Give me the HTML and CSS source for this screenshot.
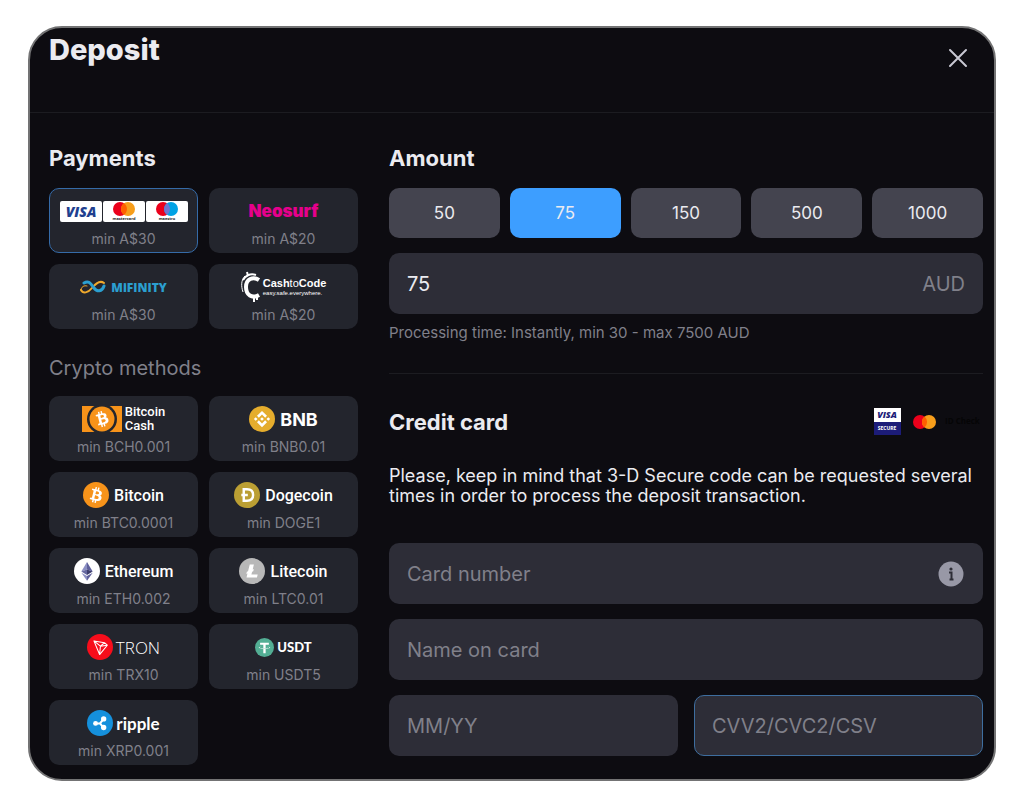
FILE: index.html
```
<!DOCTYPE html>
<html lang="en">
<head>
    <meta charset="UTF-8">
    <meta name="viewport" content="width=device-width, initial-scale=1.0">
    <title>Deposit</title>
    <link rel="stylesheet" href="styles.css">
</head>
<body>
    <main class="modal">
        <header class="modal-header">
            <h1>Deposit</h1>
            <button type="button" class="close" aria-label="Close">
                <svg width="20" height="20" viewBox="0 0 20 20"><path d="M2 2l16 16M18 2L2 18" stroke="#c9c9d3" stroke-width="2" stroke-linecap="round"/></svg>
            </button>
        </header>

        <div class="modal-body">
            <section class="methods">
                <h2>Payments</h2>
                <div class="tiles">
                    <button type="button" class="tile active">
                        <span class="logo">
                            <svg width="128" height="21" viewBox="0 0 128 21">
                                <rect width="42" height="21" rx="2" fill="#fff"/>
                                <rect x="43" width="42" height="21" rx="2" fill="#fff"/>
                                <rect x="86" width="42" height="21" rx="2" fill="#fff"/>
                                <text x="21" y="16" class="visa-text">VISA</text>
                                <circle cx="60" cy="8" r="7" fill="#eb001b"/>
                                <circle cx="68" cy="8" r="7" fill="#f79e1b"/>
                                <path d="M64 2.300a7 7 0 0 1 0 11.400a7 7 0 0 1 0-11.400z" fill="#ff5f00"/>
                                <text x="64" y="19" class="brand-text">mastercard</text>
                                <circle cx="103" cy="8" r="7" fill="#eb001b"/>
                                <circle cx="111" cy="8" r="7" fill="#00a2e5"/>
                                <path d="M107 2.300a7 7 0 0 1 0 11.400a7 7 0 0 1 0-11.400z" fill="#7375cf"/>
                                <text x="107" y="19" class="brand-text">maestro</text>
                            </svg>
                        </span>
                        <span class="min">min A$30</span>
                    </button>
                    <button type="button" class="tile">
                        <span class="logo neosurf">Neosurf</span>
                        <span class="min">min A$20</span>
                    </button>
                    <button type="button" class="tile">
                        <span class="logo mifinity">
                            <svg width="26" height="14" viewBox="0 0 26 14" fill="none" stroke-linecap="round">
                                <path d="M1 10c2 4 7 3 11-2s8-8 12-5" stroke="#efa92c" stroke-width="2"/>
                                <path d="M4 3c5-3 7 1 10 5s8 4 10-2" stroke="#2b9fd0" stroke-width="3"/>
                                <path d="M1 10C1 7 4 5 7 6" stroke="#efa92c" stroke-width="1"/>
                            </svg>
                            <span>MiFINITY</span>
                        </span>
                        <span class="min">min A$30</span>
                    </button>
                    <button type="button" class="tile">
                        <span class="logo cashtocode">
                            <svg width="20" height="32" viewBox="0 0 20 32" fill="none" stroke="#fff">
                                <path d="M18 9C12 5 5 8 5 16s6 12 13 8" stroke-width="4"/>
                                <path d="M4 5C0 9 0 15 2 21" stroke-width="1"/>
                                <path d="M6 1l1 4M13 26v5M16 26v3" stroke-width="2"/>
                                <path d="M2 9C4 5 9 2 15 4" stroke-width="2"/>
                            </svg>
                            <span class="cash-words">
                                <span class="cash-name">Cash<i>to</i>Code</span>
                                <span class="cash-tag">easy.safe.everywhere.</span>
                            </span>
                        </span>
                        <span class="min">min A$20</span>
                    </button>
                </div>

                <h3>Crypto methods</h3>
                <div class="tiles">
                    <button type="button" class="tile">
                        <span class="logo bch">
                            <svg width="40" height="26" viewBox="0 0 40 26">
                                <rect width="40" height="26" fill="#f7931a"/>
                                <circle cx="20" cy="13" r="15" fill="#24262d"/>
                                <circle cx="20" cy="13" r="12.500" fill="#f7931a"/>
                                <g transform="rotate(-28 20 13) translate(7 0) scale(.81)"><path fill="#fff" d="M23.189 14.02c.314-2.096-1.283-3.223-3.465-3.975l.708-2.84-1.728-.43-.69 2.765c-.454-.114-.92-.22-1.385-.326l.695-2.783L15.596 6l-.708 2.839c-.376-.086-.746-.17-1.104-.26l.002-.009-2.384-.595-.46 1.846s1.283.294 1.256.312c.7.175.826.638.805 1.006l-.806 3.235c.048.012.11.03.18.057l-.183-.045-1.13 4.532c-.086.212-.303.531-.793.41.018.025-1.256-.313-1.256-.313l-.858 1.978 2.25.561c.418.105.828.215 1.231.318l-.715 2.872 1.727.43.708-2.84c.472.127.93.245 1.378.357l-.706 2.828 1.728.43.715-2.866c2.948.558 5.164.333 6.097-2.333.752-2.146-.037-3.385-1.588-4.192 1.13-.26 1.98-1.003 2.207-2.538zm-3.95 5.538c-.533 2.147-4.148.986-5.32.695l.95-3.805c1.172.293 4.929.872 4.37 3.11zm.535-5.569c-.487 1.953-3.495.96-4.47.717l.86-3.45c.975.243 4.118.696 3.61 2.733z"/></g>
                            </svg>
                            <span>Bitcoin<br>Cash</span>
                        </span>
                        <span class="min">min BCH0.001</span>
                    </button>
                    <button type="button" class="tile">
                        <span class="logo bnb">
                            <svg width="26" height="26" viewBox="0 0 32 32">
                                <circle cx="16" cy="16" r="16" fill="#e5ad2d"/>
                                <path fill="#fff" d="M12.116 14.404L16 10.52l3.886 3.886 2.26-2.26L16 6l-6.144 6.144 2.26 2.26zM6 16l2.260-2.260L10.520 16l-2.260 2.260L6 16zm6.116 1.596L16 21.480l3.886-3.886 2.260 2.259L16 26l-6.144-6.144-.003-.003 2.263-2.257zM21.480 16l2.260-2.260L26 16l-2.260 2.260L21.480 16zM16 13.700l2.300 2.300-2.300 2.300-2.300-2.300z"/>
                            </svg>
                            <span>BNB</span>
                        </span>
                        <span class="min">min BNB0.01</span>
                    </button>
                    <button type="button" class="tile">
                        <span class="logo coin">
                            <svg width="26" height="26" viewBox="0 0 32 32">
                                <circle cx="16" cy="16" r="16" fill="#f7931a"/>
                                <path fill="#fff" d="M23.189 14.02c.314-2.096-1.283-3.223-3.465-3.975l.708-2.84-1.728-.43-.69 2.765c-.454-.114-.92-.22-1.385-.326l.695-2.783L15.596 6l-.708 2.839c-.376-.086-.746-.17-1.104-.26l.002-.009-2.384-.595-.46 1.846s1.283.294 1.256.312c.7.175.826.638.805 1.006l-.806 3.235c.048.012.11.03.18.057l-.183-.045-1.13 4.532c-.086.212-.303.531-.793.41.018.025-1.256-.313-1.256-.313l-.858 1.978 2.25.561c.418.105.828.215 1.231.318l-.715 2.872 1.727.43.708-2.84c.472.127.93.245 1.378.357l-.706 2.828 1.728.43.715-2.866c2.948.558 5.164.333 6.097-2.333.752-2.146-.037-3.385-1.588-4.192 1.13-.26 1.98-1.003 2.207-2.538zm-3.95 5.538c-.533 2.147-4.148.986-5.32.695l.95-3.805c1.172.293 4.929.872 4.37 3.11zm.535-5.569c-.487 1.953-3.495.96-4.47.717l.86-3.45c.975.243 4.118.696 3.61 2.733z"/>
                            </svg>
                            <span>Bitcoin</span>
                        </span>
                        <span class="min">min BTC0.0001</span>
                    </button>
                    <button type="button" class="tile">
                        <span class="logo coin">
                            <svg width="26" height="26" viewBox="0 0 32 32">
                                <circle cx="16" cy="16" r="16" fill="#bb9f33"/>
                                <path d="M12 9h4c5 0 7.500 3 7.500 7s-2.500 7-7.500 7h-4zM9 16h8" fill="none" stroke="#fff" stroke-width="3"/>
                            </svg>
                            <span>Dogecoin</span>
                        </span>
                        <span class="min">min DOGE1</span>
                    </button>
                    <button type="button" class="tile">
                        <span class="logo coin">
                            <svg width="26" height="26" viewBox="0 0 32 32">
                                <circle cx="16" cy="16" r="16" fill="#fff"/>
                                <path d="M16 5l-7 11.500L16 14z" fill="#8b8fc4"/>
                                <path d="M16 5l7 11.500L16 14z" fill="#5e609b"/>
                                <path d="M9 16.500L16 14v7z" fill="#65679f"/>
                                <path d="M23 16.500L16 14v7z" fill="#3c3d6d"/>
                                <path d="M9 18l7 4v6z" fill="#8b8fc4"/>
                                <path d="M23 18l-7 4v6z" fill="#5e609b"/>
                            </svg>
                            <span>Ethereum</span>
                        </span>
                        <span class="min">min ETH0.002</span>
                    </button>
                    <button type="button" class="tile">
                        <span class="logo coin">
                            <svg width="26" height="26" viewBox="0 0 32 32">
                                <circle cx="16" cy="16" r="16" fill="#b8b8b8"/>
                                <path fill="#fff" d="M10.427 19.214L9 19.768l.688-2.759 1.444-.58L13.213 8h5.129l-1.519 6.196 1.410-.571-.680 2.750-1.427.571-.848 3.483H23L22.127 24H9.252z"/>
                            </svg>
                            <span>Litecoin</span>
                        </span>
                        <span class="min">min LTC0.01</span>
                    </button>
                    <button type="button" class="tile">
                        <span class="logo tron">
                            <svg width="26" height="26" viewBox="0 0 32 32">
                                <circle cx="16" cy="16" r="16" fill="#f70d1b"/>
                                <path d="M8.500 8.500l13 2.300 3.500 3-9.500 11.500zM8.500 8.500l8 6.500 5-4.200M16.500 15l8.500-1.200M16.500 15l-1 10.300" fill="none" stroke="#fff" stroke-width="1.300" stroke-linejoin="round"/>
                            </svg>
                            <span>TRON</span>
                        </span>
                        <span class="min">min TRX10</span>
                    </button>
                    <button type="button" class="tile">
                        <span class="logo usdt">
                            <svg width="19" height="19" viewBox="0 0 32 32">
                                <circle cx="16" cy="16" r="16" fill="#53ae94"/>
                                <path fill="#fff" d="M17.922 17.383v-.002c-.11.008-.677.042-1.942.042-1.010 0-1.721-.03-1.971-.042v.003c-3.888-.171-6.790-.848-6.790-1.658 0-.809 2.902-1.486 6.790-1.660v2.644c.254.018.982.061 1.988.061 1.207 0 1.812-.05 1.925-.06v-2.643c3.880.173 6.775.850 6.775 1.658 0 .810-2.895 1.485-6.775 1.657m0-3.590v-2.366h5.414V7.819H8.595v3.608h5.414v2.365c-4.400.202-7.709 1.074-7.709 2.118 0 1.044 3.309 1.915 7.709 2.118v7.582h3.913v-7.584c4.393-.202 7.694-1.073 7.694-2.116 0-1.043-3.301-1.914-7.694-2.117"/>
                            </svg>
                            <span>USDT</span>
                        </span>
                        <span class="min">min USDT5</span>
                    </button>
                    <button type="button" class="tile">
                        <span class="logo ripple">
                            <svg width="26" height="26" viewBox="0 0 32 32">
                                <circle cx="16" cy="16" r="16" fill="#1590dc"/>
                                <path d="M11 16.500h5l4-5M16 16.500l4 5" fill="none" stroke="#fff" stroke-width="2.500"/>
                                <circle cx="10.500" cy="16.500" r="3" fill="#fff"/>
                                <circle cx="20.500" cy="11" r="3.300" fill="#fff"/>
                                <circle cx="20.500" cy="21.500" r="3.300" fill="#fff"/>
                            </svg>
                            <span>ripple</span>
                        </span>
                        <span class="min">min XRP0.001</span>
                    </button>
                </div>
            </section>

            <form class="payment">
                <h2>Amount</h2>
                <div class="amounts">
                    <button type="button">50</button>
                    <button type="button" class="selected">75</button>
                    <button type="button">150</button>
                    <button type="button">500</button>
                    <button type="button">1000</button>
                </div>
                <div class="field amount-field">
                    <input type="text" value="75" aria-label="Amount" inputmode="decimal">
                    <span class="currency">AUD</span>
                </div>
                <p class="hint">Processing time: Instantly, min 30 - max 7500 AUD</p>

                <div class="card-header">
                    <h2>Credit card</h2>
                    <svg width="110" height="28" viewBox="0 0 110 28" aria-hidden="true">
                        <rect x="1" width="27" height="14" fill="#fff"/>
                        <rect x="1" width="27" height="13" y="14" fill="#1c1c78"/>
                        <text x="14" y="10" class="badge-visa">VISA</text>
                        <text x="14" y="22" class="badge-secure">SECURE</text>
                        <circle cx="47" cy="14" r="7" fill="#eb001b"/>
                        <circle cx="56" cy="14" r="7" fill="#f79e1b"/>
                        <path d="M51.500 8.600a7 7 0 0 1 0 10.800a7 7 0 0 1 0-10.800z" fill="#ff5f00"/>
                        <text x="72" y="16" class="badge-id">ID Check</text>
                    </svg>
                </div>
                <p class="notice">Please, keep in mind that 3-D Secure code can be requested several times in order to process the deposit transaction.</p>

                <div class="card-fields">
                    <div class="field wide">
                        <input type="text" placeholder="Card number" aria-label="Card number">
                        <button type="button" class="info" aria-label="Card number info">
                            <svg width="26" height="26" viewBox="0 0 26 26">
                                <circle cx="13" cy="13" r="12.500" fill="#9898a6"/>
                                <circle cx="13" cy="8" r="1.600" fill="#2d2d36"/>
                                <path d="M11 11.500h2.500V18M11.500 18.500h4" fill="none" stroke="#2d2d36" stroke-width="2"/>
                            </svg>
                        </button>
                    </div>
                    <div class="field wide">
                        <input type="text" placeholder="Name on card" aria-label="Name on card">
                    </div>
                    <div class="field">
                        <input type="text" placeholder="MM/YY" aria-label="Expiry date">
                    </div>
                    <div class="field focused">
                        <input type="text" placeholder="CVV2/CVC2/CSV" aria-label="Security code">
                    </div>
                </div>
            </form>
        </div>
    </main>
</body>
</html>
```
FILE: styles.css
```
:root {
    --bg-color: #0d0c11;
    --tile-color: #23252d;
    --field-color: #2d2d37;
    --button-color: #44444f;
    --accent-color: #3d9eff;
    --text-color: #ebebf0;
    --muted-color: #80808a;
}

* {
    box-sizing: border-box;
}

body {
    font-family: Inter, "Liberation Sans", sans-serif;
    margin: 0;
    padding: 26px 28px;
    background: #fff;
    color: var(--text-color);
}

h1, h2, h3, p {
    margin: 0;
}

button, input {
    font-family: inherit;
    color: inherit;
}

button {
    border: none;
    padding: 0;
    cursor: pointer;
}

.modal {
    background: var(--bg-color);
    border: 2px solid #737374;
    border-radius: 34px;
    overflow: hidden;
}

.modal-header {
    display: flex;
    justify-content: space-between;
    align-items: flex-start;
    height: 85px;
    padding: 5px 24px 0 19px;
    border-bottom: 1px solid #1c1c21;
}

h1 {
    font-size: 29px;
    line-height: 34px;
    font-weight: 800;
}

.close {
    display: flex;
    padding: 15px 2px;
    background: none;
}

.modal-body {
    display: grid;
    grid-template-columns: minmax(0, 309fr) minmax(0, 594fr);
    gap: 31px;
    padding: 32px 11px 14px 19px;
}

h2 {
    font-size: 22px;
    line-height: 26px;
    font-weight: 700;
}

h3 {
    margin: 25px 0 14px;
    font-size: 20px;
    line-height: 28px;
    font-weight: 400;
    color: var(--muted-color);
}

/* payment methods */
.tiles {
    display: grid;
    grid-template-columns: 1fr 1fr;
    gap: 11px;
}

h2 + .tiles,
.amounts {
    margin-top: 17px;
}

.tile {
    display: flex;
    flex-direction: column;
    align-items: center;
    height: 65px;
    padding-top: 5px;
    background: var(--tile-color);
    border: 1px solid transparent;
    border-radius: 10px;
}

.tile.active {
    border-color: #356ba8;
}

.logo {
    display: flex;
    align-items: center;
    justify-content: center;
    height: 34px;
    gap: 5px;
    color: #fff;
}

.min {
    font-size: 14px;
    line-height: 22px;
    color: var(--muted-color);
}

.visa-text {
    font: italic 800 14px "Open Sans", sans-serif;
    fill: #213f8f;
    text-anchor: middle;
}

.brand-text {
    font: 700 4px "Open Sans", sans-serif;
    fill: #222;
    text-anchor: middle;
}

.neosurf {
    font-size: 17px;
    font-weight: 900;
    color: #e6008c;
}

.mifinity {
    font: 800 12px "Open Sans", sans-serif;
    color: #2b9fd0;
}

.cashtocode {
    gap: 2px;
    font-family: "Liberation Sans", sans-serif;
}

.cash-words {
    display: flex;
    flex-direction: column;
    align-items: flex-start;
}

.cash-name {
    font-size: 11px;
    line-height: 11px;
    font-weight: 700;
}

.cash-name i {
    font-weight: 400;
    font-style: normal;
}

.cash-tag {
    font-size: 6px;
    line-height: 8px;
}

.bch {
    gap: 3px;
    font: 500 13px/14px Roboto, sans-serif;
    text-align: left;
}

.coin {
    font: 500 16px Roboto, sans-serif;
}

.bnb {
    font-size: 18px;
    font-weight: 700;
}

.tron {
    gap: 3px;
    font: 300 17px "Open Sans", sans-serif;
}

.usdt {
    gap: 3px;
    font: 900 13px Lato, sans-serif;
}

.ripple {
    gap: 3px;
    font: 700 17px Lato, sans-serif;
}

/* amount */
.amounts {
    display: grid;
    grid-template-columns: repeat(5, 1fr);
    gap: 10px;
}

.amounts button {
    height: 50px;
    border-radius: 10px;
    background: var(--button-color);
    font-size: 17px;
}

.amounts .selected {
    background: var(--accent-color);
}

.field {
    display: flex;
    align-items: center;
    height: 61px;
    padding: 0 17px;
    background: var(--field-color);
    border: 1px solid transparent;
    border-radius: 10px;
}

.field input {
    flex: 1;
    min-width: 0;
    padding: 0;
    border: none;
    outline: none;
    background: none;
    font-size: 20px;
}

.field input::placeholder {
    color: var(--muted-color);
    opacity: 1;
}

.field.focused {
    border-color: #3e6e9f;
}

.amount-field {
    margin-top: 15px;
}

.currency {
    font-size: 20px;
    color: var(--muted-color);
}

.hint {
    padding: 8px 0 29px;
    border-bottom: 1px solid #1c1c21;
    font-size: 15px;
    line-height: 22px;
    color: var(--muted-color);
}

/* credit card */
.card-header {
    display: flex;
    justify-content: space-between;
    align-items: center;
    margin-top: 34px;
}

.notice {
    margin: 30px 0 37px;
    font-size: 18px;
    line-height: 20px;
}

.card-fields {
    display: grid;
    grid-template-columns: repeat(2, minmax(0, 1fr));
    gap: 15px 16px;
}

.wide {
    grid-column: span 2;
}

.info {
    display: flex;
    background: none;
    margin-right: 1px;
}

.badge-visa {
    font: italic 800 9px "Open Sans", sans-serif;
    fill: #1c1c78;
    text-anchor: middle;
}

.badge-secure {
    font: 700 5px "Open Sans", sans-serif;
    fill: #fff;
    text-anchor: middle;
}

.badge-id {
    font: 700 8px "Open Sans", sans-serif;
    fill: #050506;
}
```
